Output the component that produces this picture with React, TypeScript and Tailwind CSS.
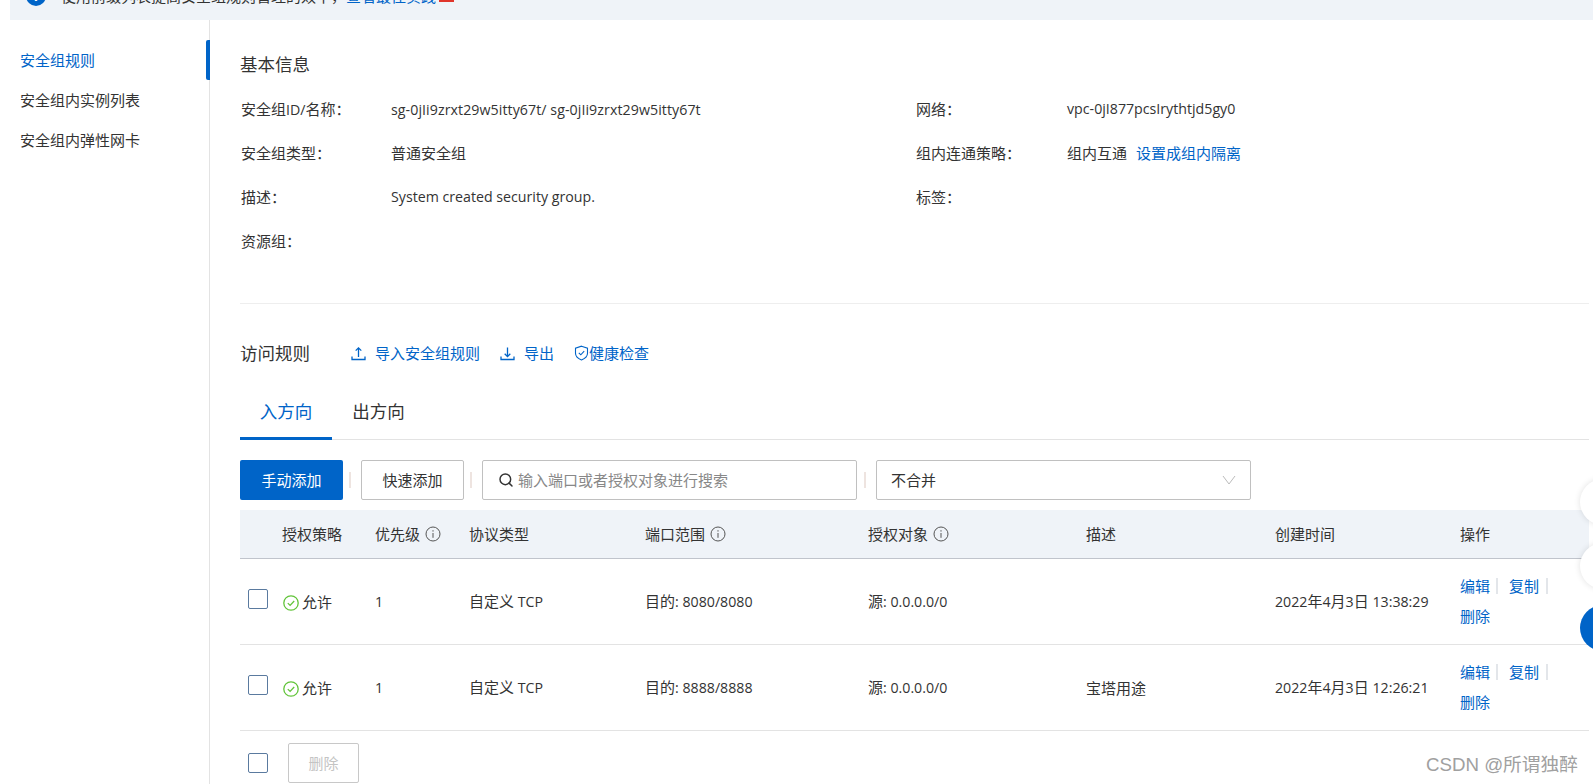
import React from "react";
import { Search } from "lucide-react";

const textFont = "font-['Open_Sans','Noto_Sans_CJK_SC',sans-serif]";

// latin runs sit a bit smaller than the cjk text, as in the picture
function Mixed({ text }: { text: string }) {
    const parts = text.split(/([\x20-\x7e]+)/).filter(Boolean);
    return (
        <>
            {parts.map((part, i) =>
                /[\x20-\x7e]/.test(part[0]) ? (
                    <span key={i} className="whitespace-pre text-[14.2px]">{part}</span>
                ) : (
                    <span key={i}>{part}</span>
                )
            )}
        </>
    );
}

function InfoIcon() {
    return (
        <svg width="16" height="16" viewBox="0 0 16 16" fill="none" stroke="#555" strokeWidth="1" className="ml-[5px] shrink-0">
            <circle cx="8" cy="8" r="7" />
            <path d="M8 7v4.8M8 4.2v1.4" />
        </svg>
    );
}

function AllowIcon() {
    return (
        <svg width="16" height="16" viewBox="0 0 16 16" fill="none" stroke="#62c43a" strokeWidth="1.3" className="mt-[3px] shrink-0">
            <circle cx="8" cy="8" r="7.2" />
            <path d="M4.8 8.1l2.3 2.3 4.1-4.4" />
        </svg>
    );
}

function ShieldIcon() {
    return (
        <svg width="15" height="16" viewBox="0 0 15 16" fill="none" stroke="#0064c8" strokeWidth="1.1" className="shrink-0">
            <path d="M7.5 1.2l6 2v5c0 3.2-2.6 5.4-6 6.7-3.4-1.3-6-3.5-6-6.7v-5z" />
            <path d="M4.8 7.8l2 2 3.4-3.6" />
        </svg>
    );
}

function UploadIcon() {
    return (
        <svg width="15" height="15" viewBox="0 0 15 15" fill="none" stroke="#0064c8" strokeWidth="1.3" className="ml-[1px] mr-[10px] shrink-0">
            <path d="M1 10.5v3h13v-3" />
            <path d="M7.5 11V2M4.7 4.6l2.8-2.8 2.8 2.8" />
        </svg>
    );
}

function DownloadIcon() {
    return (
        <svg width="15" height="15" viewBox="0 0 15 15" fill="none" stroke="#0064c8" strokeWidth="1.3" className="ml-[1px] mr-[10px] shrink-0">
            <path d="M1 10.5v3h13v-3" />
            <path d="M7.5 1.5v9M4.7 7.8l2.8 2.8 2.8-2.8" />
        </svg>
    );
}

function Checkbox() {
    return <div className="h-5 w-5 rounded-[2px] border border-[#5a7a9f] bg-white" />;
}

function InfoRow({ label, children, labelWidth }: { label: string; children?: React.ReactNode; labelWidth: string }) {
    return (
        <div className="flex h-11 items-center text-[#333]">
            <div className={`${labelWidth} shrink-0 pl-[1px]`}><Mixed text={label} /></div>
            <div className="flex items-center">{children}</div>
        </div>
    );
}

const rows = [
    { port: "目的: 8080/8080", desc: "", time: "2022年4月3日 13:38:29" },
    { port: "目的: 8888/8888", desc: "宝塔用途", time: "2022年4月3日 12:26:21" },
];

function Sep({ className }: { className: string }) {
    return <span className={`${className} h-[16px] w-[2px] bg-[#e3e6ea]`} />;
}

function ToolSep({ left }: { left: string }) {
    return <span className={`${left} mr-[10px] h-[16px] w-[2px] bg-[#eee4e0]`} />;
}

export default function App() {
    return (
        <div className={`relative h-[784px] w-[1593px] overflow-hidden bg-white text-[15px] leading-5 ${textFont}`}>
            <div className="ml-[10px] h-5 overflow-hidden bg-[#eff3f8]">
                <div className="-mt-[14px] flex h-5 items-center pl-[16px] text-[#333]">
                    <div className="mr-[15px] flex h-5 w-5 items-center justify-center rounded-full bg-[#0064c8] text-[14px] font-bold text-white">i</div>
                    <span>使用前缀列表提高安全组规则管理的效率，</span>
                    <span className="text-[#0064c8]">查看最佳实践</span>
                    <span className="mb-[4px] ml-[3px] h-[14px] w-[15px] self-end bg-[#e0352b]" />
                </div>
            </div>

            <div className="flex h-[764px]">
                <div className="relative ml-[10px] w-[200px] shrink-0 border-r border-[#e3e3e3] pt-[20px] text-[#333]">
                    <div className="absolute right-[-1px] top-[20px] h-[40px] w-[4px] rounded-l-[2px] bg-[#0064c8]" />
                    <div className="flex h-[40px] items-center pl-[10px] text-[#0064c8]">安全组规则</div>
                    <div className="flex h-[40px] items-center pl-[10px]">安全组内实例列表</div>
                    <div className="flex h-[40px] items-center pl-[10px]">安全组内弹性网卡</div>
                </div>

                <div className="w-[1379px] shrink-0 pl-[30px]">
                    <div className="w-[1349px]">
                        <div className="pt-[32px] text-[17.5px] leading-6 text-[#333]">基本信息</div>
                        <div className="mt-[11px] flex h-[176px]">
                            <div className="w-[675px] shrink-0">
                                <InfoRow labelWidth="w-[151px]" label="安全组ID/名称：">
                                    <span className="tracking-[0.07px]"><Mixed text="sg-0jIi9zrxt29w5itty67t/ sg-0jIi9zrxt29w5itty67t" /></span>
                                </InfoRow>
                                <InfoRow labelWidth="w-[151px]" label="安全组类型：">普通安全组</InfoRow>
                                <InfoRow labelWidth="w-[151px]" label="描述："><Mixed text="System created security group." /></InfoRow>
                                <InfoRow labelWidth="w-[151px]" label="资源组：" />
                            </div>
                            <div className="flex-1">
                                <InfoRow labelWidth="w-[152px]" label="网络："><Mixed text="vpc-0jI877pcsIrythtjd5gy0" /></InfoRow>
                                <InfoRow labelWidth="w-[152px]" label="组内连通策略：">
                                    组内互通<span className="ml-[9px] text-[#0064c8]">设置成组内隔离</span>
                                </InfoRow>
                                <InfoRow labelWidth="w-[152px]" label="标签：" />
                            </div>
                        </div>
                        <div className="mt-[40px] border-t border-[#eeeeee]" />

                        <div className="mt-[37px] flex h-6 items-center text-[#0064c8]">
                            <span className="mr-[40px] text-[17.5px] text-[#333]">访问规则</span>
                            <UploadIcon />
                            <span className="-ml-[1px] mr-[19px]">导入安全组规则</span>
                            <DownloadIcon />
                            <span className="-ml-[1px] mr-[20px]">导出</span>
                            <ShieldIcon />
                            <span>健康检查</span>
                        </div>

                        <div className="mt-[20px] flex h-[55px] border-b border-[#e3e3e3] text-[17.5px] leading-6">
                            <div className="-mb-px w-[92px] border-b-[3px] border-[#0064c8] pt-[14px] text-center text-[#0064c8]">入方向</div>
                            <div className="w-[93px] pt-[14px] text-center text-[#333]">出方向</div>
                        </div>

                        <div className="mt-[20px] flex h-10 items-center">
                            <button className="h-10 w-[103px] rounded-[2px] bg-[#0064c8] text-white">手动添加</button>
                            <ToolSep left="ml-[6px]" />
                            <button className="h-10 w-[103px] rounded-[2px] border border-[#c0c0c0] bg-white text-[#333]">快速添加</button>
                            <ToolSep left="ml-[6px]" />
                            <div className="flex h-10 w-[375px] items-center rounded-[2px] border border-[#c0c0c0] pl-[15px] text-[#888]">
                                <Search size={16} strokeWidth={2.2} className="mr-[4px] text-[#333]" />
                                输入端口或者授权对象进行搜索
                            </div>
                            <ToolSep left="ml-[7px]" />
                            <div className="flex h-10 w-[375px] items-center justify-between rounded-[2px] border border-[#c0c0c0] pl-[14px] pr-[14px] text-[#333]">
                                不合并
                                <svg width="14" height="10" viewBox="0 0 14 10" fill="none" stroke="#bbb" strokeWidth="1">
                                    <path d="M1 1l6 8 6-8" />
                                </svg>
                            </div>
                        </div>

                        <div className="mt-[10px] flex h-[49px] items-center border-b border-[#c0c4cc] bg-[#eff3f8] text-[#333]">
                            <div className="w-[135px] pl-[42px]">授权策略</div>
                            <div className="flex w-[94px] items-center">优先级<InfoIcon /></div>
                            <div className="w-[176px]">协议类型</div>
                            <div className="flex w-[223px] items-center">端口范围<InfoIcon /></div>
                            <div className="flex w-[218px] items-center">授权对象<InfoIcon /></div>
                            <div className="w-[189px]">描述</div>
                            <div className="w-[185px]">创建时间</div>
                            <div>操作</div>
                        </div>

                        {rows.map((row) => (
                            <div key={row.time} className="flex h-[86px] items-center border-b border-[#e3e3e3] text-[#333]">
                                <div className="-mt-[6px] w-[43px] pl-[8px]"><Checkbox /></div>
                                <div className="flex w-[92px] items-center gap-[3px]"><AllowIcon />允许</div>
                                <div className="w-[94px]"><Mixed text="1" /></div>
                                <div className="w-[176px]"><Mixed text="自定义 TCP" /></div>
                                <div className="w-[223px]"><Mixed text={row.port} /></div>
                                <div className="w-[218px]"><Mixed text="源: 0.0.0.0/0" /></div>
                                <div className="w-[189px]">{row.desc}</div>
                                <div className="w-[185px] whitespace-nowrap"><Mixed text={row.time} /></div>
                                <div className="-mt-[1px] text-[#0064c8]">
                                    <div className="flex h-[30px] items-center">
                                        编辑<Sep className="ml-[6px] mr-[11px]" />复制<Sep className="ml-[7px]" />
                                    </div>
                                    <div className="flex h-[30px] items-center">删除</div>
                                </div>
                            </div>
                        ))}

                        <div className="mt-[12px] flex items-center">
                            <div className="pl-[8px]"><Checkbox /></div>
                            <button className="ml-[20px] h-10 w-[71px] rounded-[2px] border border-[#c8c8c8] text-[#c4c4c4]">删除</button>
                        </div>
                    </div>
                </div>
            </div>

            <div className="absolute left-[1580px] top-[479px] h-[46px] w-[46px] rounded-full bg-white shadow-[0_0_6px_rgba(0,0,0,0.12)]" />
            <div className="absolute left-[1580px] top-[543px] h-[46px] w-[46px] rounded-full bg-white shadow-[0_0_6px_rgba(0,0,0,0.12)]" />
            <div className="absolute left-[1580px] top-[605px] h-[46px] w-[46px] rounded-full bg-[#0064c8]" />
            <div className="absolute left-[1426px] top-[753px] font-['Liberation_Sans','Noto_Sans_CJK_SC',sans-serif] text-[18.7px] leading-6 text-[#a0a0a0]">CSDN @所谓独醉</div>
        </div>
    );
}
